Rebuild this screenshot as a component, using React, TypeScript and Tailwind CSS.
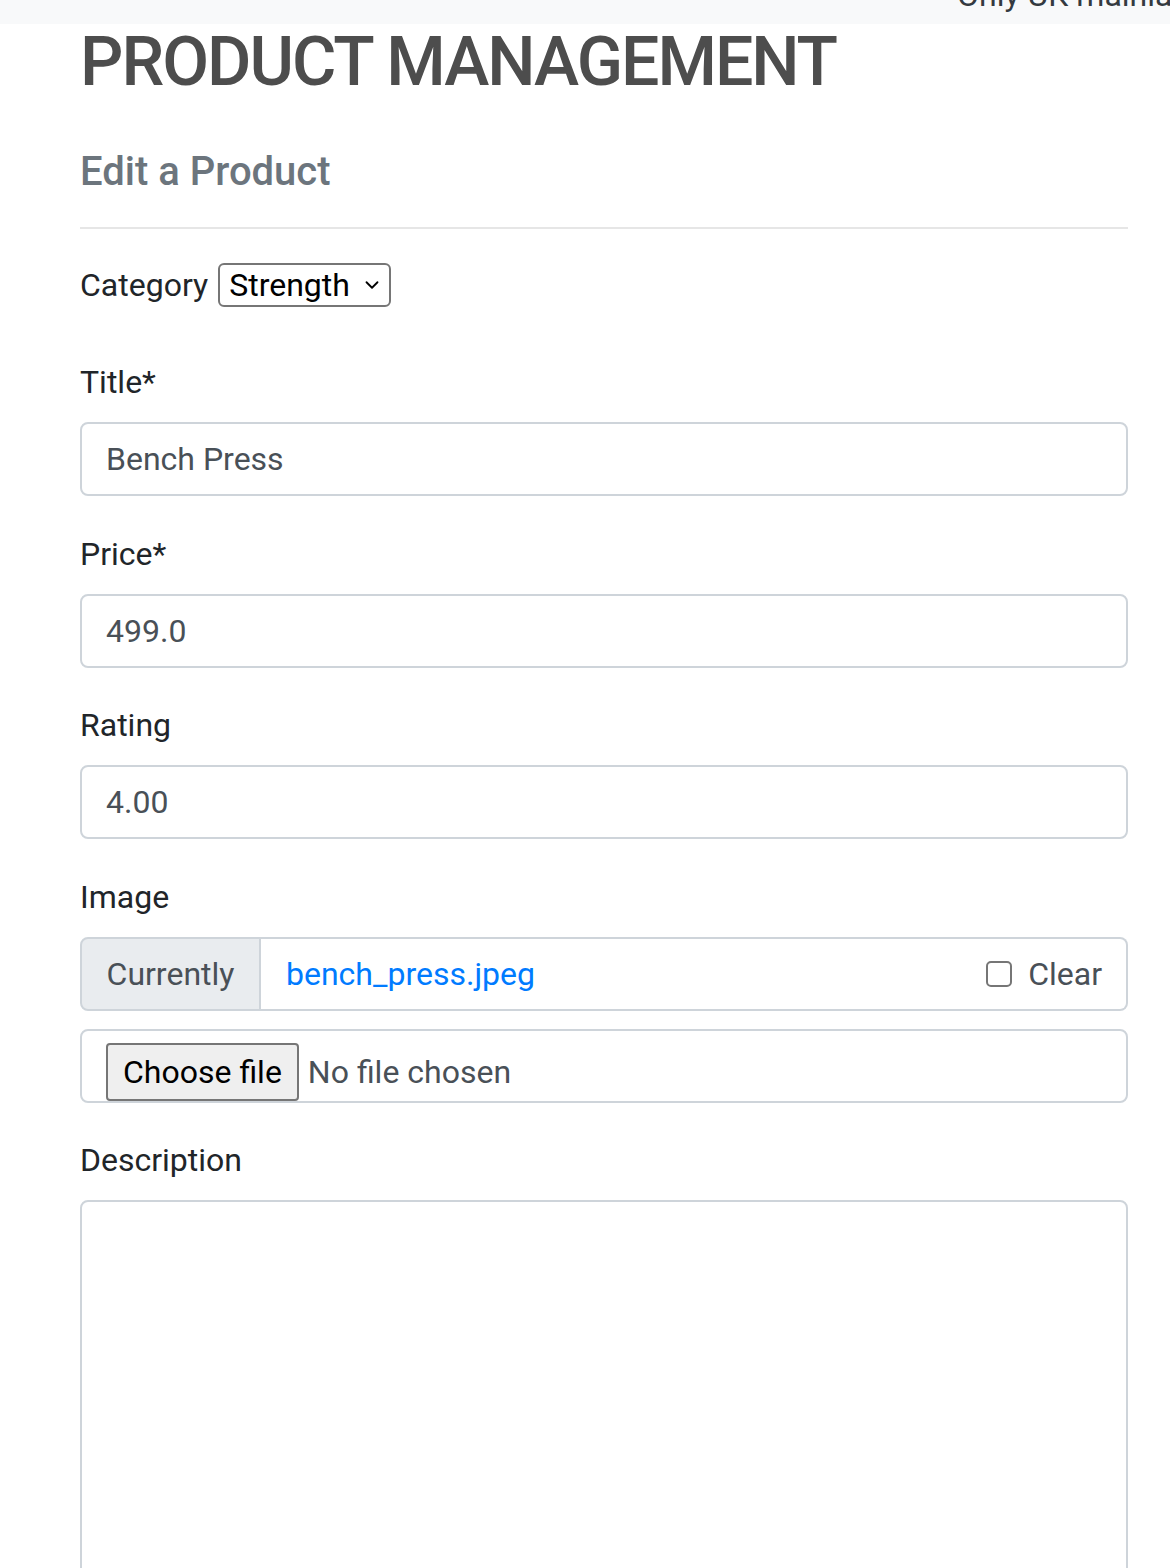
import { ChevronDown } from 'lucide-react'

const FONT = { fontFamily: 'Roboto, "Noto Sans", sans-serif' }

function Field({ label, value }: { label: string; value: string }) {
  return (
    <div className="mb-[34.5px]">
      <label className="block h-[47px] leading-[47px] text-[32px] text-[#212529] mb-[16px]">{label}</label>
      <div className="h-[74px] border-2 border-[#ced4da] rounded-[8px] px-[24px] flex items-center text-[32px] text-[#495057]">
        {value}
      </div>
    </div>
  )
}

export default function App() {
  return (
    <div style={FONT} className="bg-white min-h-[1568px] overflow-hidden">
      {/* barra superior */}
      <div className="h-[24px] bg-[#f8f9fa] overflow-hidden">
        <div className="pl-[957px] whitespace-nowrap text-[32px] leading-[32px] text-[#343a40] -mt-[21px]">
          Only UK mainland delivery
        </div>
      </div>

      <div className="px-[80px] w-[1208px]">
        <h1 className="mt-[4px] text-[68px] leading-none font-medium text-[#4d4d4d] tracking-[-2px]">PRODUCT MANAGEMENT</h1>
        <h2 className="mt-[55.5px] text-[40px] leading-none font-medium text-[#6c757d]">Edit a Product</h2>
        <hr className="mt-[35.5px] border-0 border-t-2 border-[#e6e6e6]" />

        {/* categoria */}
        <div className="mt-[34px] h-[44px] flex items-center gap-[10px] text-[32px] text-[#212529]">
          <span>Category</span>
          <div className="h-[44px] w-[173px] border-2 border-[#767676] rounded-[6px] flex items-center justify-between pl-[9px] pr-[6px] text-black">
            <span>Strength</span>
            <ChevronDown size={22} strokeWidth={2} />
          </div>
        </div>

        <div className="mt-[52px]">
          <Field label="Title*" value="Bench Press" />
          <Field label="Price*" value="499.0" />
          <Field label="Rating" value="4.00" />

          {/* imagen */}
          <div className="mb-[34.5px]">
            <label className="block h-[47px] leading-[47px] text-[32px] text-[#212529] mb-[16px]">Image</label>
            <div className="flex h-[74px] text-[32px]">
              <div className="w-[181px] bg-[#e9ecef] border-2 border-[#ced4da] rounded-l-[8px] flex items-center justify-center text-[#495057]">
                Currently
              </div>
              <div className="flex-1 border-2 border-l-0 border-[#ced4da] rounded-r-[8px] flex items-center justify-between pl-[25px] pr-[24px]">
                <span className="text-[#007bff]">bench_press.jpeg</span>
                <span className="flex items-center gap-[16px] text-[#495057]">
                  <span className="w-[26px] h-[26px] border-2 border-[#767676] rounded-[5px] bg-white" />
                  Clear
                </span>
              </div>
            </div>
            <div className="mt-[18px] h-[74px] border-2 border-[#ced4da] rounded-[8px] flex items-end pl-[24px] text-[32px]">
              <div className="h-[58px] px-[15px] bg-[#efefef] border-2 border-[#767676] rounded-[4px] flex items-center text-black">
                Choose file
              </div>
              <span className="ml-[9px] h-[58px] flex items-center text-[#495057]">No file chosen</span>
            </div>
          </div>

          {/* descripcion */}
          <label className="block h-[47px] leading-[47px] text-[32px] text-[#212529] mb-[16px]">Description</label>
          <div className="h-[420px] border-2 border-[#ced4da] rounded-[8px]" />
        </div>
      </div>
    </div>
  )
}
